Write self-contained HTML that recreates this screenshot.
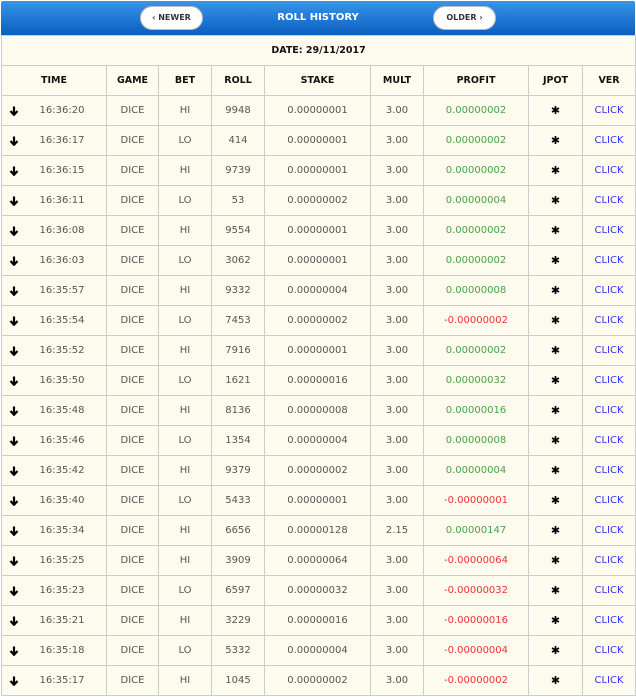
<!DOCTYPE html><html><head><style>
body{margin:0;width:636px;height:697px;background:#fff;font-family:"DejaVu Sans","Liberation Sans",sans-serif;overflow:hidden}
.hd{position:absolute;left:1px;top:1px;width:634px;height:34px;background:linear-gradient(#3a94ea,#0a5fc0);border-radius:2px 2px 0 0}
.hd .t{position:absolute;left:0;right:0;top:11px;text-align:center;color:#fff;font-weight:bold;font-size:10px}
.btn{position:absolute;top:5px;height:24px;width:63px;background:#fff;border-radius:12px;border:1px solid #bbb;box-sizing:border-box;font-size:8px;font-weight:bold;color:#333;text-align:center;line-height:22px}
table{position:absolute;left:1px;top:35px;width:634px;border-collapse:collapse;table-layout:fixed;background:#fdfbee}
td{border:1px solid #ccc;height:29px;padding:0;text-align:center;font-size:10px;color:#555}
tr.h td{font-weight:bold;color:#111;font-size:9.5px}
.g{color:#4aa344}.r{color:#e33}.b{color:#33e}
.a{position:relative;padding-left:16px}.a svg{position:absolute;left:7px;top:10px}
.s{color:#000;font-size:11px}
</style></head><body>
<div class="hd"><div class="t">ROLL HISTORY</div>
<div class="btn" style="left:139px">‹ NEWER</div>
<div class="btn" style="left:432px">OLDER ›</div></div>
<svg width="0" height="0" style="position:absolute"><defs><symbol id="ar" viewBox="0 0 10 10"><path d="M5 0.5V8.5M1.5 5L5 8.8L8.5 5" fill="none" stroke="#000" stroke-width="2.2"/></symbol></defs></svg>
<table>
<colgroup><col style="width:105px"><col style="width:52px"><col style="width:53px"><col style="width:53px"><col style="width:106px"><col style="width:53px"><col style="width:105px"><col style="width:54px"><col style="width:53px"></colgroup>
<tr class="h"><td colspan="9">DATE: 29/11/2017</td></tr>
<tr class="h"><td>TIME</td><td>GAME</td><td>BET</td><td>ROLL</td><td>STAKE</td><td>MULT</td><td>PROFIT</td><td>JPOT</td><td>VER</td></tr>
<tr><td class="a"><svg width="10" height="10"><use href="#ar"/></svg>16:36:20</td><td>DICE</td><td>HI</td><td>9948</td><td>0.00000001</td><td>3.00</td><td class="g">0.00000002</td><td class="s">✱</td><td class="b">CLICK</td></tr>
<tr><td class="a"><svg width="10" height="10"><use href="#ar"/></svg>16:36:17</td><td>DICE</td><td>LO</td><td>414</td><td>0.00000001</td><td>3.00</td><td class="g">0.00000002</td><td class="s">✱</td><td class="b">CLICK</td></tr>
<tr><td class="a"><svg width="10" height="10"><use href="#ar"/></svg>16:36:15</td><td>DICE</td><td>HI</td><td>9739</td><td>0.00000001</td><td>3.00</td><td class="g">0.00000002</td><td class="s">✱</td><td class="b">CLICK</td></tr>
<tr><td class="a"><svg width="10" height="10"><use href="#ar"/></svg>16:36:11</td><td>DICE</td><td>LO</td><td>53</td><td>0.00000002</td><td>3.00</td><td class="g">0.00000004</td><td class="s">✱</td><td class="b">CLICK</td></tr>
<tr><td class="a"><svg width="10" height="10"><use href="#ar"/></svg>16:36:08</td><td>DICE</td><td>HI</td><td>9554</td><td>0.00000001</td><td>3.00</td><td class="g">0.00000002</td><td class="s">✱</td><td class="b">CLICK</td></tr>
<tr><td class="a"><svg width="10" height="10"><use href="#ar"/></svg>16:36:03</td><td>DICE</td><td>LO</td><td>3062</td><td>0.00000001</td><td>3.00</td><td class="g">0.00000002</td><td class="s">✱</td><td class="b">CLICK</td></tr>
<tr><td class="a"><svg width="10" height="10"><use href="#ar"/></svg>16:35:57</td><td>DICE</td><td>HI</td><td>9332</td><td>0.00000004</td><td>3.00</td><td class="g">0.00000008</td><td class="s">✱</td><td class="b">CLICK</td></tr>
<tr><td class="a"><svg width="10" height="10"><use href="#ar"/></svg>16:35:54</td><td>DICE</td><td>LO</td><td>7453</td><td>0.00000002</td><td>3.00</td><td class="r">-0.00000002</td><td class="s">✱</td><td class="b">CLICK</td></tr>
<tr><td class="a"><svg width="10" height="10"><use href="#ar"/></svg>16:35:52</td><td>DICE</td><td>HI</td><td>7916</td><td>0.00000001</td><td>3.00</td><td class="g">0.00000002</td><td class="s">✱</td><td class="b">CLICK</td></tr>
<tr><td class="a"><svg width="10" height="10"><use href="#ar"/></svg>16:35:50</td><td>DICE</td><td>LO</td><td>1621</td><td>0.00000016</td><td>3.00</td><td class="g">0.00000032</td><td class="s">✱</td><td class="b">CLICK</td></tr>
<tr><td class="a"><svg width="10" height="10"><use href="#ar"/></svg>16:35:48</td><td>DICE</td><td>HI</td><td>8136</td><td>0.00000008</td><td>3.00</td><td class="g">0.00000016</td><td class="s">✱</td><td class="b">CLICK</td></tr>
<tr><td class="a"><svg width="10" height="10"><use href="#ar"/></svg>16:35:46</td><td>DICE</td><td>LO</td><td>1354</td><td>0.00000004</td><td>3.00</td><td class="g">0.00000008</td><td class="s">✱</td><td class="b">CLICK</td></tr>
<tr><td class="a"><svg width="10" height="10"><use href="#ar"/></svg>16:35:42</td><td>DICE</td><td>HI</td><td>9379</td><td>0.00000002</td><td>3.00</td><td class="g">0.00000004</td><td class="s">✱</td><td class="b">CLICK</td></tr>
<tr><td class="a"><svg width="10" height="10"><use href="#ar"/></svg>16:35:40</td><td>DICE</td><td>LO</td><td>5433</td><td>0.00000001</td><td>3.00</td><td class="r">-0.00000001</td><td class="s">✱</td><td class="b">CLICK</td></tr>
<tr><td class="a"><svg width="10" height="10"><use href="#ar"/></svg>16:35:34</td><td>DICE</td><td>HI</td><td>6656</td><td>0.00000128</td><td>2.15</td><td class="g">0.00000147</td><td class="s">✱</td><td class="b">CLICK</td></tr>
<tr><td class="a"><svg width="10" height="10"><use href="#ar"/></svg>16:35:25</td><td>DICE</td><td>HI</td><td>3909</td><td>0.00000064</td><td>3.00</td><td class="r">-0.00000064</td><td class="s">✱</td><td class="b">CLICK</td></tr>
<tr><td class="a"><svg width="10" height="10"><use href="#ar"/></svg>16:35:23</td><td>DICE</td><td>LO</td><td>6597</td><td>0.00000032</td><td>3.00</td><td class="r">-0.00000032</td><td class="s">✱</td><td class="b">CLICK</td></tr>
<tr><td class="a"><svg width="10" height="10"><use href="#ar"/></svg>16:35:21</td><td>DICE</td><td>HI</td><td>3229</td><td>0.00000016</td><td>3.00</td><td class="r">-0.00000016</td><td class="s">✱</td><td class="b">CLICK</td></tr>
<tr><td class="a"><svg width="10" height="10"><use href="#ar"/></svg>16:35:18</td><td>DICE</td><td>LO</td><td>5332</td><td>0.00000004</td><td>3.00</td><td class="r">-0.00000004</td><td class="s">✱</td><td class="b">CLICK</td></tr>
<tr><td class="a"><svg width="10" height="10"><use href="#ar"/></svg>16:35:17</td><td>DICE</td><td>HI</td><td>1045</td><td>0.00000002</td><td>3.00</td><td class="r">-0.00000002</td><td class="s">✱</td><td class="b">CLICK</td></tr>
</table></body></html>
